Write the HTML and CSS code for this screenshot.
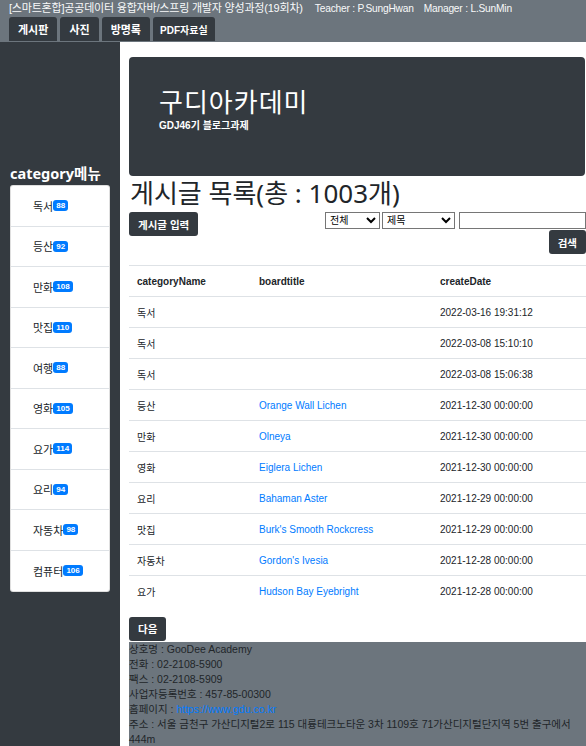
FILE: index.html
```html
<!DOCTYPE html>
<html lang="ko">
<head>
<meta charset="utf-8">
<title>게시판</title>
<link rel="stylesheet" href="styles.css">
</head>
<body>
<header class="topbar">
  <div class="course">[스마트혼합]공공데이터 융합자바/스프링 개발자 양성과정(19회차)<span class="staff">Teacher : P.SungHwan</span><span class="staff">Manager : L.SunMin</span></div>
  <nav class="tabs">
    <a class="tab">게시판</a>
    <a class="tab">사진</a>
    <a class="tab">방명록</a>
    <a class="tab tab-sm">PDF자료실</a>
  </nav>
</header>
<div class="layout">
  <aside class="sidebar">
    <h3 class="side-title">category메뉴</h3>
    <ul class="cats">
      <li class="cat">독서<span class="badge">88</span></li>
      <li class="cat">등산<span class="badge">92</span></li>
      <li class="cat">만화<span class="badge">108</span></li>
      <li class="cat">맛집<span class="badge">110</span></li>
      <li class="cat">여행<span class="badge">88</span></li>
      <li class="cat">영화<span class="badge">105</span></li>
      <li class="cat">요가<span class="badge">114</span></li>
      <li class="cat">요리<span class="badge">94</span></li>
      <li class="cat">자동차<span class="badge">98</span></li>
      <li class="cat">컴퓨터<span class="badge">106</span></li>
    </ul>
  </aside>
  <main class="main">
    <div class="jumbo">
      <h1 class="jumbo-title">구디아카데미</h1>
      <p class="jumbo-sub">GDJ46기 블로그과제</p>
    </div>
    <h2 class="list-title">게시글 목록(총 : 1003개)</h2>
    <div class="toolbar">
      <a class="btn">게시글 입력</a>
      <form class="search">
        <div class="search-row">
          <select class="sel sel-a"><option>전체</option></select>
          <select class="sel sel-b"><option>제목</option></select>
          <input class="query" type="text">
        </div>
        <button class="btn" type="button">검색</button>
      </form>
    </div>
    <table class="board">
      <thead>
        <tr><th class="c1">categoryName</th><th class="c2">boardtitle</th><th class="c3">createDate</th></tr>
      </thead>
      <tbody>
        <tr><td>독서</td><td></td><td>2022-03-16 19:31:12</td></tr>
        <tr><td>독서</td><td></td><td>2022-03-08 15:10:10</td></tr>
        <tr><td>독서</td><td></td><td>2022-03-08 15:06:38</td></tr>
        <tr><td>등산</td><td><a class="link">Orange Wall Lichen</a></td><td>2021-12-30 00:00:00</td></tr>
        <tr><td>만화</td><td><a class="link">Olneya</a></td><td>2021-12-30 00:00:00</td></tr>
        <tr><td>영화</td><td><a class="link">Eiglera Lichen</a></td><td>2021-12-30 00:00:00</td></tr>
        <tr><td>요리</td><td><a class="link">Bahaman Aster</a></td><td>2021-12-29 00:00:00</td></tr>
        <tr><td>맛집</td><td><a class="link">Burk's Smooth Rockcress</a></td><td>2021-12-29 00:00:00</td></tr>
        <tr><td>자동차</td><td><a class="link">Gordon's Ivesia</a></td><td>2021-12-28 00:00:00</td></tr>
        <tr><td>요가</td><td><a class="link">Hudson Bay Eyebright</a></td><td>2021-12-28 00:00:00</td></tr>
      </tbody>
    </table>
    <div class="pager"><a class="btn">다음</a></div>
    <footer class="footer">
      <div>상호명 : GooDee Academy</div>
      <div>전화 : 02-2108-5900</div>
      <div>팩스 : 02-2108-5909</div>
      <div>사업자등록번호 : 457-85-00300</div>
      <div>홈페이지 : <a class="link">https://www.gdu.co.kr</a></div>
      <div>주소 : 서울 금천구 가산디지털2로 115 대륭테크노타운 3차 1109호 71가산디지털단지역 5번 출구에서 444m</div>
    </footer>
  </main>
</div>
</body>
</html>
```

FILE: styles.css
```css
* { box-sizing: border-box; }

html, body {
  margin: 0;
  padding: 0;
}

body {
  width: 586px;
  min-height: 746px;
  font-family: "Liberation Sans", "Noto Sans CJK KR", sans-serif;
  font-size: 10px;
  color: #212529;
  background: #343a40;
  overflow: hidden;
}

.topbar {
  background: #6c757d;
  padding: 0 0 1px 9px;
  height: 42px;
}

.course {
  color: #f8f9fa;
  font-size: 11px;
  line-height: 16px;
  height: 16px;
  white-space: nowrap;
  letter-spacing: -0.2px;
}

.staff {
  margin-left: 12px;
  font-size: 10.2px;
}

.staff + .staff {
  margin-left: 10px;
}

.tabs {
  display: flex;
  gap: 3px;
  margin-top: 1px;
}

.tab {
  display: flex;
  align-items: center;
  justify-content: center;
  height: 24px;
  padding: 0 9px;
  background: #343a40;
  color: #fff;
  font-size: 11px;
  font-weight: 700;
  border-radius: 3px 3px 0 0;
}

.tab-sm {
  font-size: 10px;
  padding: 0 7px;
}

.layout {
  display: flex;
  min-height: 704px;
}

.sidebar {
  width: 120px;
  flex: none;
  background: #343a40;
  padding: 119px 10px 0 10px;
}

.side-title {
  margin: 0;
  color: #fff;
  font-family: "Noto Sans", "Noto Sans CJK KR", sans-serif;
  font-size: 14.5px;
  font-weight: 700;
  line-height: 24px;
}

.cats {
  list-style: none;
  margin: 0;
  padding: 0;
  background: #fff;
  border: 1px solid rgba(0,0,0,0.125);
  border-radius: 3px;
}

.cat {
  height: 40.5px;
  display: flex;
  align-items: center;
  padding-left: 22px;
  font-size: 11px;
  color: #212529;
  border-bottom: 1px solid #dee2e6;
}

.cat:last-child {
  border-bottom: none;
}

.badge {
  display: inline-block;
  background: #007bff;
  color: #fff;
  font-size: 8px;
  font-weight: 700;
  line-height: 1;
  padding: 2px 3px 1px;
  border-radius: 3px;
}

.main {
  flex: 1;
  background: #fff;
  padding: 15px 0 0 9px;
}

.jumbo {
  background: #343a40;
  border-radius: 4px;
  height: 119px;
  margin-right: 1px;
  padding: 27px 30px 0 30px;
  color: #fff;
}

.jumbo-title {
  margin: 0;
  font-family: "Noto Sans CJK KR", sans-serif;
  font-size: 26px;
  font-weight: 400;
  line-height: 34px;
  letter-spacing: 1px;
}

.jumbo-sub {
  margin: 1px 0 0 0;
  font-size: 10px;
  font-weight: 700;
  line-height: 14px;
}

.list-title {
  margin: 0;
  font-family: "Noto Sans", "Noto Sans CJK KR", sans-serif;
  font-size: 26px;
  font-weight: 400;
  line-height: 34px;
  padding-left: 1px;
}

.toolbar {
  display: flex;
  justify-content: space-between;
  align-items: flex-start;
  margin-top: 2px;
  height: 53px;
}

.btn {
  display: inline-flex;
  align-items: center;
  justify-content: center;
  height: 24px;
  padding: 0 9px;
  background: #343a40;
  color: #fff;
  border: none;
  border-radius: 3px;
  font-family: inherit;
  font-size: 10.5px;
  font-weight: 700;
}

.search {
  display: flex;
  flex-direction: column;
  align-items: flex-end;
  gap: 1px;
}

.search-row {
  display: flex;
  gap: 2px;
}

.sel {
  height: 17px;
  font-family: inherit;
  font-size: 10px;
  border: 1px solid #767676;
  border-radius: 0;
  background: #fff;
  padding: 0;
  color: #000;
}

.sel-a { width: 55px; }
.sel-b { width: 73px; margin-right: 2px; }

.query {
  width: 127px;
  height: 17px;
  border: 1px solid #767676;
  padding: 0;
}

.board {
  width: 100%;
  border-collapse: collapse;
  font-size: 10px;
}

.board th, .board td {
  text-align: left;
  height: 31px;
  padding: 0 8px;
  border-top: 1px solid #dee2e6;
  vertical-align: middle;
}

.board th {
  font-weight: 700;
  border-bottom: 1px solid #dee2e6;
}

.c1 { width: 122px; }
.c2 { width: 181px; }

.link {
  color: #007bff;
}

.pager {
  margin-top: 10px;
}

.footer {
  background: #6c757d;
  margin-top: 1px;
  padding-top: 0;
  font-size: 10.5px;
  line-height: 15px;
  color: #212529;
  min-height: 106px;
}
```
